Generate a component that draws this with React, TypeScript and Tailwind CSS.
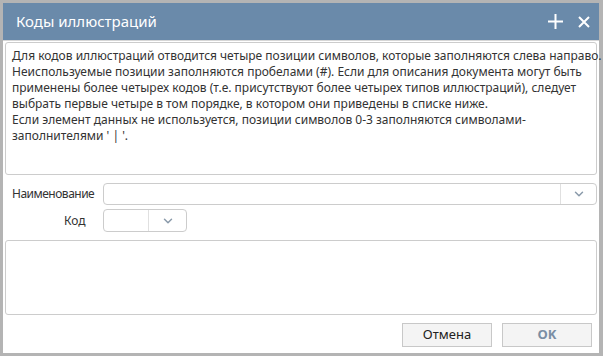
import { ChevronDown } from "lucide-react";

const DESCRIPTION = [
  "Для кодов иллюстраций отводится четыре позиции символов, которые заполняются слева направо.",
  "Неиспользуемые позиции заполняются пробелами (#). Если для описания документа могут быть",
  "применены более четырех кодов (т.е. присутствуют более четырех типов иллюстраций), следует",
  "выбрать первые четыре в том порядке, в котором они приведены в списке ниже.",
  "Если элемент данных не используется, позиции символов 0-3 заполняются символами-",
  "заполнителями ' | '.",
];

function Chevron() {
  return <ChevronDown className="h-[14px] w-[14px] text-[#8a9aaa]" strokeWidth={2.5} />;
}

export default function App() {
  return (
    <div
      className="flex h-[356px] w-[603px] flex-col bg-[#b4b4b4] pb-[3px] pl-[3px] pr-[4px] pt-[3px]"
      style={{ fontFamily: "'Noto Sans', 'DejaVu Sans', sans-serif" }}
    >
      <div className="flex flex-1 flex-col bg-white">
        {/* title bar */}
        <div className="flex h-[37px] items-center justify-between bg-[#6a8aaa] pl-[13px] pr-[9px] text-white">
          <span className="text-[15px]">Коды иллюстраций</span>
          <div className="flex items-center gap-[15px]">
            <svg width="15" height="15" viewBox="0 0 15 15" stroke="currentColor" strokeWidth="2">
              <path d="M7.5 0v15M0 7.5h15" />
            </svg>
            <svg width="12" height="12" viewBox="0 0 12 12" stroke="currentColor" strokeWidth="2">
              <path d="M1 1l10 10M11 1L1 11" />
            </svg>
          </div>
        </div>
        <div className="h-px bg-[#d6d6d6]" />

        <div className="flex flex-1 flex-col px-[2px] pt-[1px]">
          {/* description */}
          <div className="h-[133px] rounded-[3px] border border-[#cccccc] px-[6px] pt-[5px] text-[12px] leading-[16px] text-[#333]">
            {DESCRIPTION.map((l) => (
              <div key={l} className="whitespace-nowrap">{l}</div>
            ))}
          </div>

          {/* Наименование */}
          <div className="mt-[8px] flex h-[22px] items-center text-[12px] text-[#333]">
            <div className="w-[98px] pl-[7px] tracking-[-0.5px]">Наименование</div>
            <div className="flex h-[22px] flex-1 rounded-[4px] border border-[#cccccc]">
              <div className="flex-1" />
              <div className="flex w-[36px] items-center justify-center border-l border-[#e0e0e0]">
                <Chevron />
              </div>
            </div>
          </div>

          {/* Код */}
          <div className="mt-[4px] flex h-[23px] items-center text-[12px] text-[#333]">
            <div className="w-[98px] pl-[59px]">Код</div>
            <div className="flex h-[23px] w-[84px] rounded-[4px] border border-[#cccccc]">
              <div className="w-[44px]" />
              <div className="flex flex-1 items-center justify-center border-l border-[#e0e0e0]">
                <Chevron />
              </div>
            </div>
          </div>

          {/* list area */}
          <div className="mt-[8px] h-[75px] rounded-[3px] border border-[#cccccc]" />

          {/* buttons */}
          <div className="mt-[8px] flex justify-end gap-[10px] pr-[5px]">
            <button className="h-[24px] w-[90px] border border-[#c8c8c8] bg-[#f4f4f4] text-[13px] text-[#222]">
              Отмена
            </button>
            <button className="h-[24px] w-[90px] border border-[#c8c8c8] bg-[#f4f4f4] text-[13px] font-bold text-[#7a8ea4]">
              OK
            </button>
          </div>
        </div>
      </div>
    </div>
  );
}
